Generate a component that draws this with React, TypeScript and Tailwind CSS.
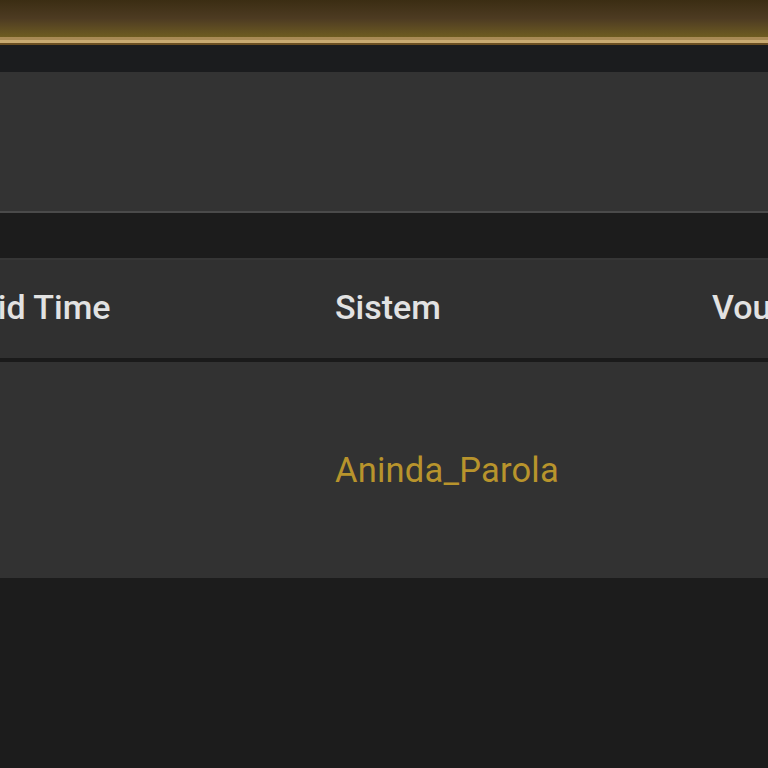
import React from "react";

const App = () => {
  return (
    <div className="w-[768px] h-[768px] overflow-hidden bg-[#1c1c1c] font-['Roboto',sans-serif]">
      {/* top gold bar */}
      <div className="h-[37px] bg-gradient-to-b from-[#3b2d13] via-[#4d3b22] to-[#6e5c20]" />
      <div className="h-[3px] bg-[#a88a55]" />
      <div className="h-[3px] bg-[#c9ab72]" />
      <div className="h-[2px] bg-[#6b4f22]" />
      <div className="h-[27px] bg-[#1b1c1e]" />

      {/* filter panel */}
      <div className="h-[141px] bg-[#333333] border-b-2 border-[#4a4a4a]" />
      <div className="h-[45px] bg-[#1c1c1c]" />

      {/* table */}
      <div className="overflow-hidden">
        <div className="flex -ml-[42px] h-[100px] items-center bg-[#303030] border-t-2 border-[#363636] text-[34px] font-medium text-[#e2e2e2]">
          <div className="w-[377px] shrink-0 whitespace-nowrap -mt-[4px]">Paid Time</div>
          <div className="w-[377px] shrink-0 -mt-[4px]">Sistem</div>
          <div className="shrink-0 whitespace-nowrap -mt-[4px]">Voucher</div>
        </div>
        <div className="h-[4px] bg-[#1a1a1a]" />
        <div className="flex -ml-[42px] h-[216px] items-center bg-[#323232] text-[34.5px] text-[#b8942c]">
          <div className="w-[377px] shrink-0" />
          <div className="w-[377px] shrink-0 mt-[2px] tracking-[0.2px]">Aninda_Parola</div>
          <div className="shrink-0" />
        </div>
      </div>
    </div>
  );
};

export default App;
